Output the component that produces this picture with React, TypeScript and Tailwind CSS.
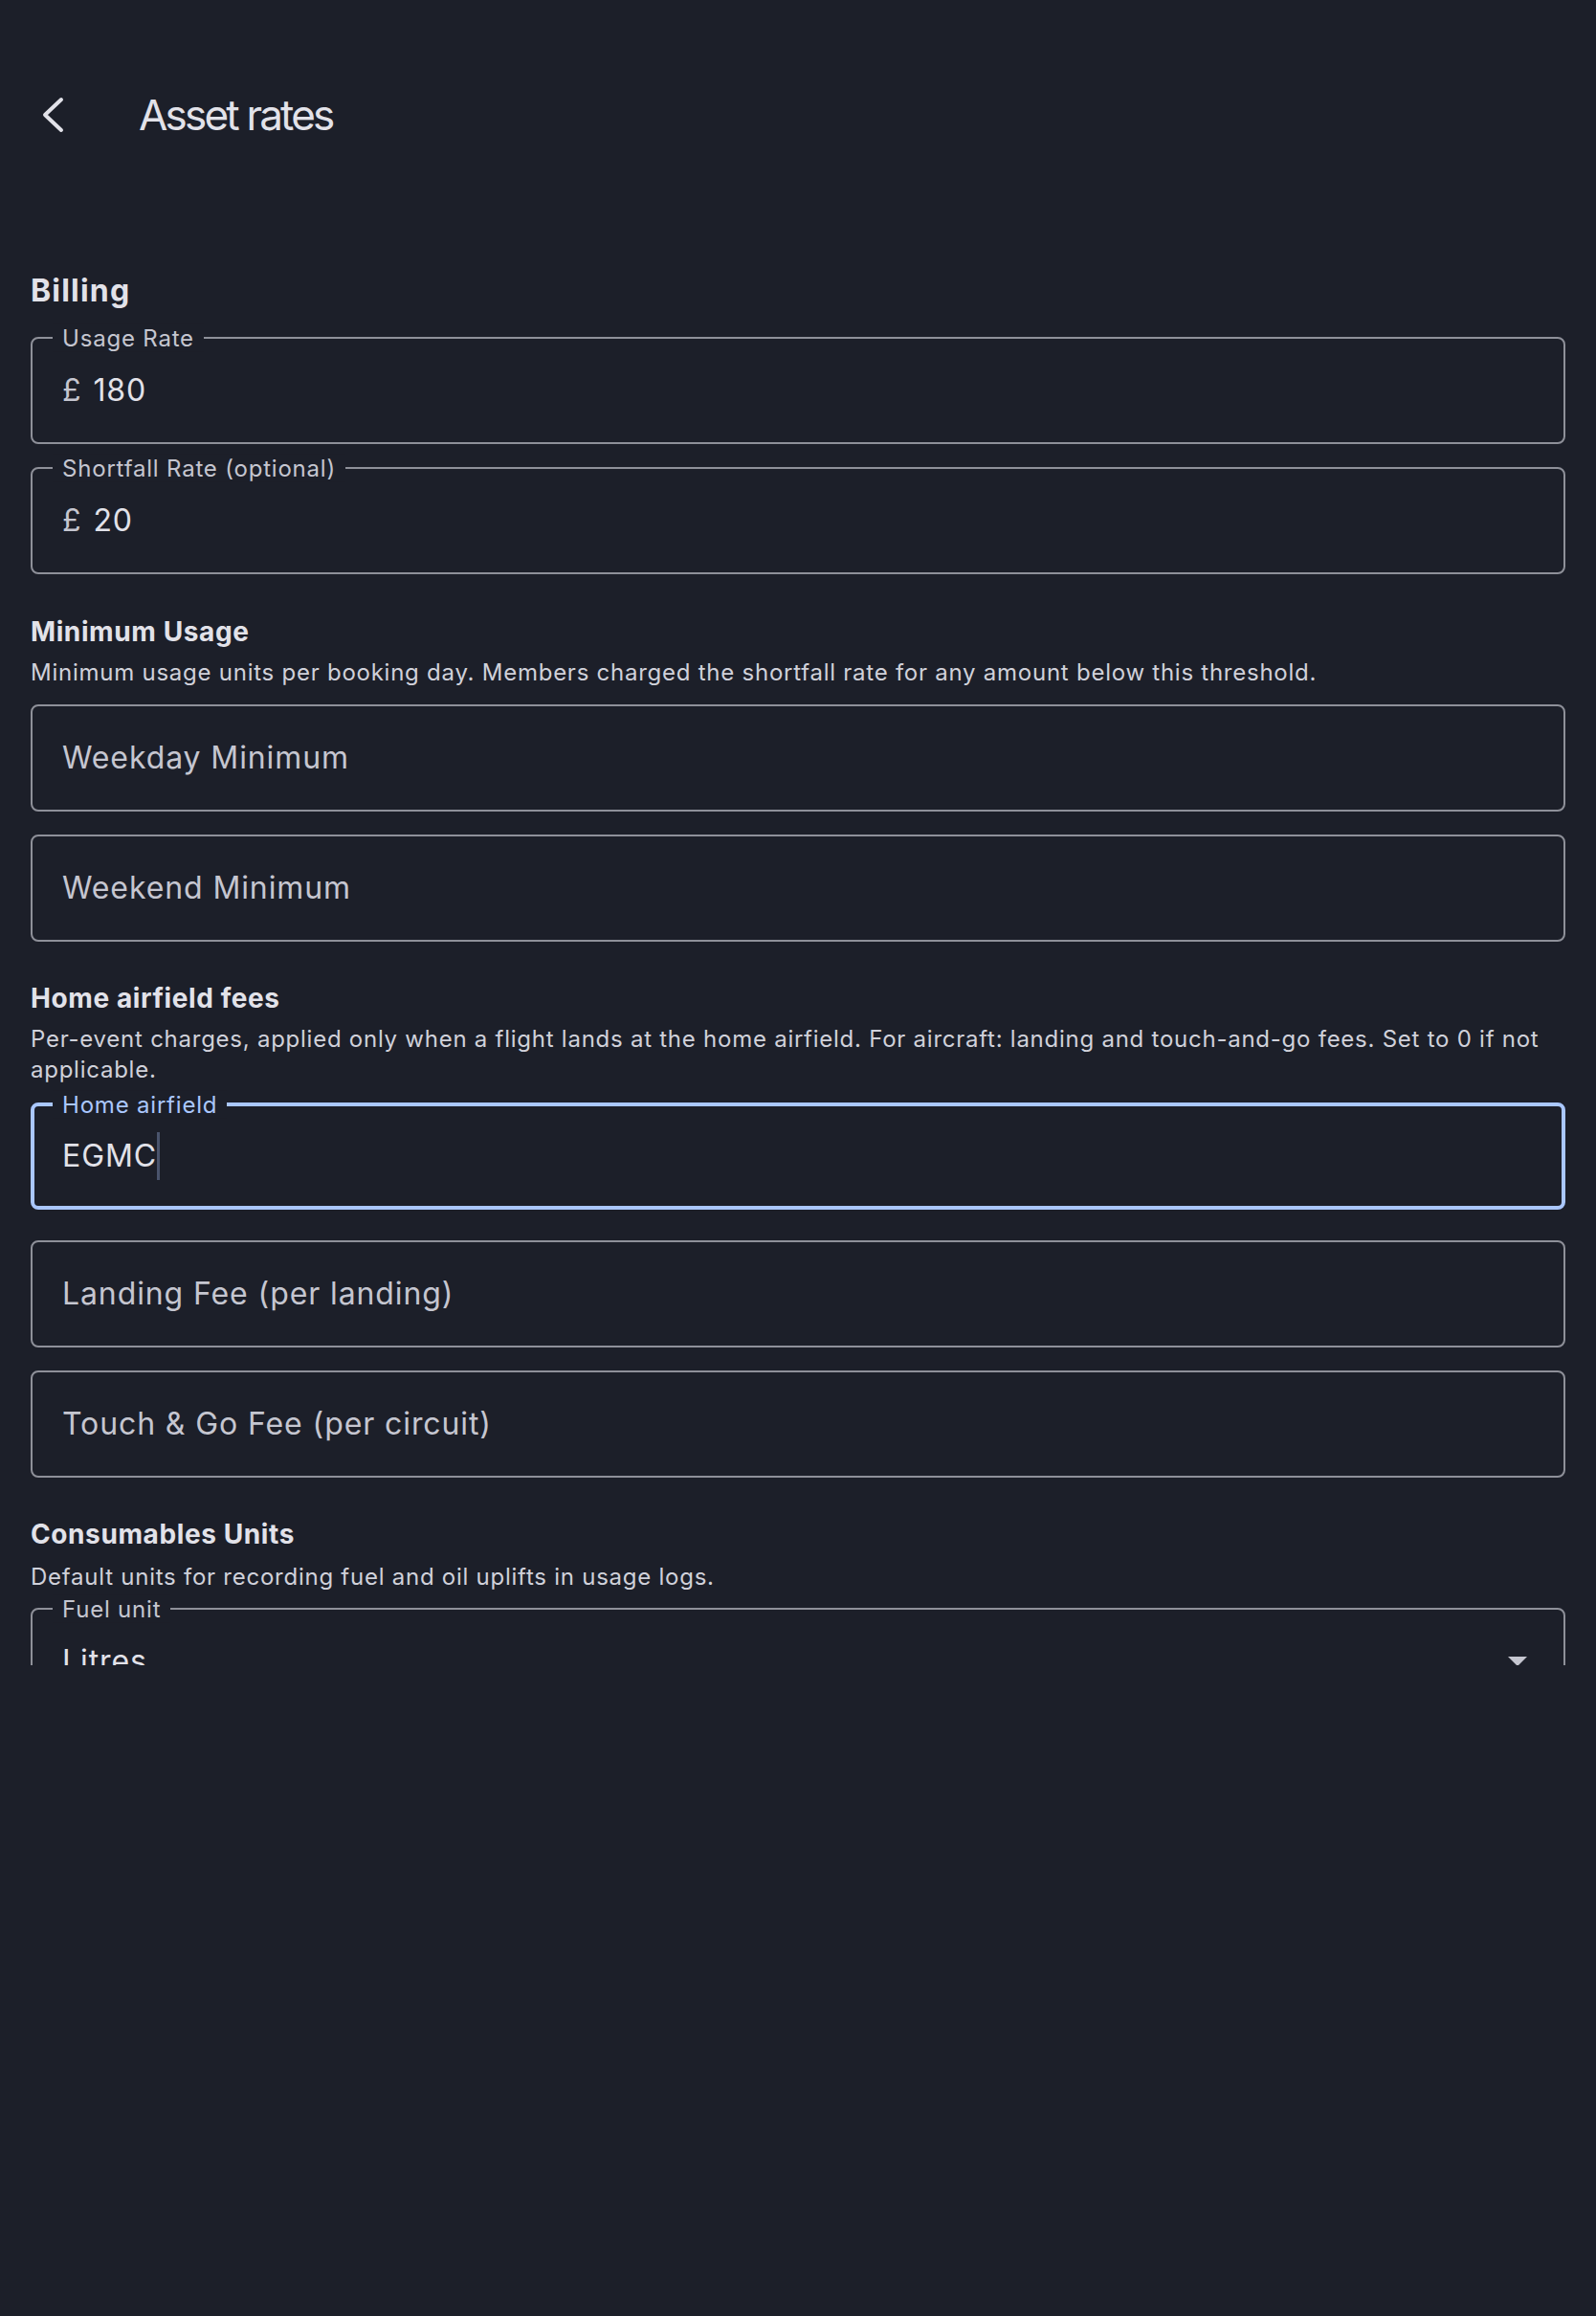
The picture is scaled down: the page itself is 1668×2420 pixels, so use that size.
import React from "react";

type FieldProps = {
  label?: string;
  prefix?: string;
  value?: string;
  placeholder?: string;
  focused?: boolean;
  select?: boolean;
  cursor?: boolean;
};

function OutlinedField({ label, prefix, value, placeholder, focused, select, cursor }: FieldProps) {
  return (
    <div
      className={`relative h-[112px] shrink-0 rounded-[8px] flex items-center ${
        focused ? "border-4 border-[#aac7ff] pl-[29px] pr-[30px]" : "border-2 border-[#8e9099] pl-[31px] pr-[32px]"
      }`}
    >
      {label && (
        <span
          className={`absolute -translate-y-1/2 px-[10px] bg-[#1c1f29] text-[24px] leading-[29px] tracking-[0.8px] whitespace-nowrap ${
            focused ? "left-[19px] top-[-2px] text-[#aac7ff]" : "left-[21px] top-[-1px] text-[#c5c6d0]"
          }`}
        >
          {label}
        </span>
      )}
      <div className="flex-1 flex items-center text-[32px] leading-normal tracking-[0.9px]">
        {prefix && <span className="text-[#c5c6d0] mr-[12px]">{prefix}</span>}
        {value && <span className="text-[#e2e2e9]">{value}</span>}
        {cursor && <span className="inline-block w-[3px] h-[50px] bg-[#4a546c]" />}
        {placeholder && <span className="text-[#c5c6d0]">{placeholder}</span>}
      </div>
      {select && (
        <svg width="20" height="10" viewBox="0 0 20 10" className="shrink-0 mr-[6px]">
          <path d="M0 0 L20 0 L10 10 Z" fill="#c5c6d0" />
        </svg>
      )}
    </div>
  );
}

function SectionTitle({ children, className = "" }: { children: React.ReactNode; className?: string }) {
  return (
    <div className={`text-[28px] leading-[36px] font-bold tracking-[0.6px] text-[#e2e2e9] ${className}`}>{children}</div>
  );
}

function Desc({ children, className = "" }: { children: React.ReactNode; className?: string }) {
  return <div className={`text-[24px] leading-[32px] tracking-[0.75px] text-[#d0d1da] ${className}`}>{children}</div>;
}

export default function App() {
  return (
    <div className="w-[1668px] h-[2420px] bg-[#1c1f29] font-['Inter','Noto_Sans',sans-serif] overflow-hidden">
      {/* App bar */}
      <div className="h-[160px] pt-[94px] flex items-start">
        <div className="w-[145px] h-[52px] flex items-center pl-[41px]">
          <svg width="28" height="40" viewBox="0 0 28 40" fill="none">
            <path d="M23 4 L6 20 L23 36" stroke="#e2e2e9" strokeWidth="4" strokeLinecap="round" strokeLinejoin="round" />
          </svg>
        </div>
        <div className="text-[44px] leading-[52px] tracking-[-2.8px] text-[#e2e2e9]">Asset rates</div>
      </div>

      {/* Scrollable content */}
      <div className="h-[1580px] overflow-hidden px-[32px] pt-[124px] flex flex-col">
        <div className="text-[32px] leading-[40px] font-bold tracking-[1.2px] text-[#e2e2e9]">Billing</div>
        <div className="mt-[28px]">
          <OutlinedField label="Usage Rate" prefix="£" value="180" />
        </div>
        <div className="mt-[24px]">
          <OutlinedField label="Shortfall Rate (optional)" prefix="£" value="20" />
        </div>

        <SectionTitle className="mt-[42px]">Minimum Usage</SectionTitle>
        <Desc className="mt-[9px]">
          Minimum usage units per booking day. Members charged the shortfall rate for any amount below this threshold.
        </Desc>
        <div className="mt-[17px]">
          <OutlinedField placeholder="Weekday Minimum" />
        </div>
        <div className="mt-[24px]">
          <OutlinedField placeholder="Weekend Minimum" />
        </div>

        <SectionTitle className="mt-[41px]">Home airfield fees</SectionTitle>
        <Desc className="mt-[9px]">
          Per-event charges, applied only when a flight lands at the home airfield. For aircraft: landing and
          touch-and-go fees. Set to 0 if not applicable.
        </Desc>
        <div className="mt-[18px]">
          <OutlinedField label="Home airfield" value="EGMC" focused cursor />
        </div>
        <div className="mt-[32px]">
          <OutlinedField placeholder="Landing Fee (per landing)" />
        </div>
        <div className="mt-[24px]">
          <OutlinedField placeholder="Touch & Go Fee (per circuit)" />
        </div>

        <SectionTitle className="mt-[41px]">Consumables Units</SectionTitle>
        <Desc className="mt-[11px]">Default units for recording fuel and oil uplifts in usage logs.</Desc>
        <div className="mt-[16px]">
          <OutlinedField label="Fuel unit" value="Litres" select />
        </div>
      </div>
    </div>
  );
}
